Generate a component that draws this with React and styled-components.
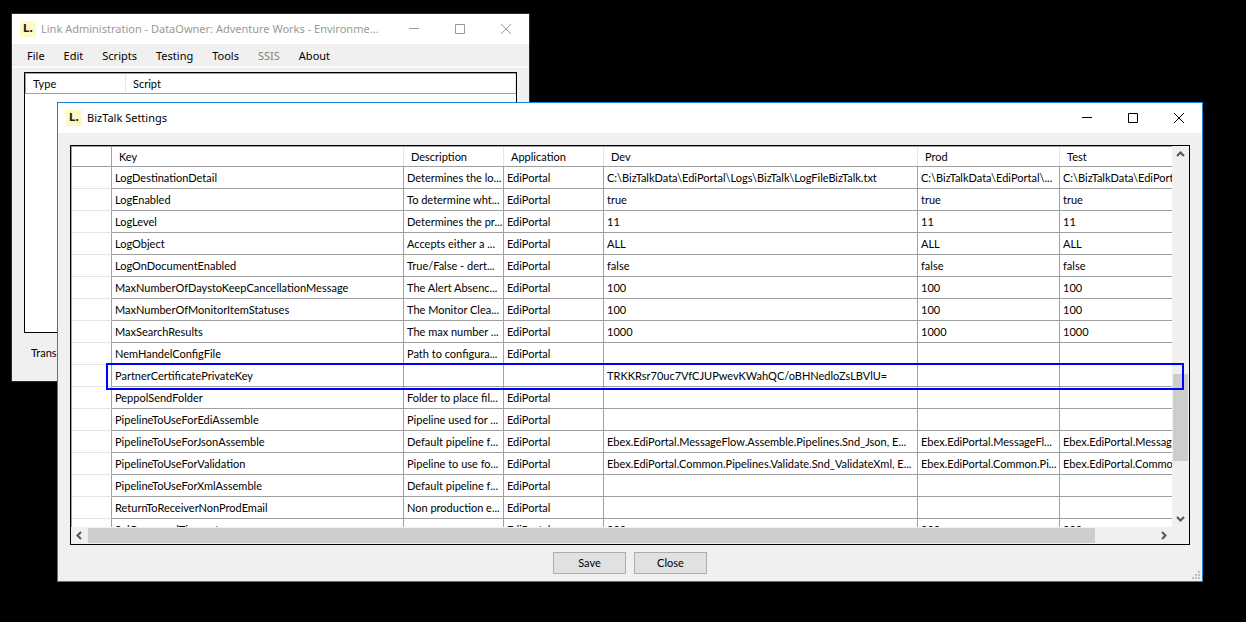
import React from "react"
import styled, { createGlobalStyle, css } from "styled-components"

const GlobalStyle = createGlobalStyle`
  * {
    box-sizing: border-box;
  }
  body {
    margin: 0;
    background: #000;
    color: #000;
    font-family: Lato, "Liberation Sans", sans-serif;
    font-size: 11px;
    line-height: 14px;
  }
  button {
    font: inherit;
    color: inherit;
    border: 0;
    padding: 0;
    background: none;
  }
`

const Desktop = styled.main`
  position: relative;
  height: 100vh;
  overflow: hidden;
`

const Window = styled.section`
  position: absolute;
  display: flex;
  flex-direction: column;
  background: #f0f0f0;
  border: 1px solid ${props => (props.$active ? "#1883d7" : "#2b2b2b")};
`

const MainWindow = styled(Window)`
  top: 13px;
  left: 11px;
  width: 519px;
`

const SettingsWindow = styled(Window)`
  top: 102px;
  right: 43px;
  bottom: 40px;
  left: 57px;
`

const TitleBar = styled.header`
  display: flex;
  align-items: center;
  flex: none;
  height: 30px;
  padding-left: 8px;
  background: #fff;
  color: ${props => (props.$active ? "#000" : "#999")};
`

const Title = styled.h1`
  flex: 1;
  margin: 0 0 0 5px;
  font-family: "Noto Sans", sans-serif;
  font-size: 11px;
  font-weight: normal;
  line-height: 16px;
  white-space: nowrap;
`

const Logo = styled.span`
  display: flex;
  align-items: center;
  justify-content: center;
  width: 16px;
  height: 16px;
  background: #fff9c4;
  color: #222;
  font-family: "DejaVu Sans", sans-serif;
  font-size: 10px;
  font-weight: bold;
  line-height: 16px;
`

const CaptionButton = styled.button`
  display: flex;
  align-items: center;
  justify-content: center;
  width: 46px;
  height: 30px;
`

const MenuBar = styled.nav`
  display: flex;
  align-items: center;
  gap: 19px;
  height: 24px;
  padding: 1px 15px 0;
  border-bottom: 2px solid #f9f9ff;
`

const MenuItem = styled.button`
  font-family: "Noto Sans", sans-serif;
  font-size: 11px;
  line-height: 16px;

  &:disabled {
    color: #838383;
  }
`

const ScriptList = styled.div`
  height: 261px;
  margin: 4px 12px 0;
  background: #fff;
  border: 1px solid #000;
`

const Status = styled.p`
  margin: 0;
  padding: 13px 19px 21px;
`

const GridFrame = styled.div`
  position: relative;
  display: grid;
  grid-template: minmax(0, 1fr) 17px / minmax(0, 1fr) 17px;
  flex: 1;
  min-height: 0;
  margin: 12px 12px 7px;
  background: #f0f0f0;
  border: 1px solid #000;
`

const GridView = styled.div`
  overflow: hidden;
  background: #fff;
  border-top: 1px solid #a0a0a0;
  border-left: 1px solid #a0a0a0;
`

const Table = styled.table`
  width: ${props => (props.$wide ? "1167px" : "100%")};
  table-layout: fixed;
  border-collapse: separate;
  border-spacing: 0;
`

const HeadCell = styled.th`
  height: 20px;
  padding: 1px 7px 0;
  border-bottom: 1px solid #a0a0a0;
  font-weight: normal;
  text-align: left;
  white-space: nowrap;
  box-shadow: inset -1px 0 #e5e5e5;

  ${props =>
    props.$corner &&
    css`
      box-shadow: inset -1px 0 #a0a0a0;
    `}
`

const Cell = styled.td`
  height: 22px;
  padding: 1px 0 0 3px;
  overflow: hidden;
  border-right: 1px solid #a0a0a0;
  border-bottom: 1px solid #a0a0a0;
  white-space: nowrap;
`

const RowHead = styled(Cell)`
  border-bottom-color: #e5e5e5;
`

const Highlight = styled.div`
  position: absolute;
  top: 217px;
  right: 5px;
  left: 35px;
  height: 27px;
  border: 2px solid #00f;
  pointer-events: none;
`

const ScrollBar = styled.div`
  display: flex;
  flex-direction: ${props => (props.$vertical ? "column" : "row")};
  padding: ${props => (props.$vertical ? "0 1px" : "1px 0")};
`

const ScrollButton = styled.button`
  display: flex;
  align-items: center;
  justify-content: center;
  flex: 0 0 17px;
`

const Track = styled.div`
  flex: ${props => props.$size} 0 0;
`

const Thumb = styled(Track)`
  background: #cdcdcd;
`

const Footer = styled.footer`
  display: flex;
  justify-content: center;
  gap: 8px;
  padding-bottom: 7px;
`

const DialogButton = styled.button`
  width: 73px;
  height: 22px;
  background: #e1e1e1;
  border: 1px solid #adadad;
`

const Grip = styled.svg`
  position: absolute;
  right: 1px;
  bottom: 1px;
`

const columns = [
  ["Key", 292],
  ["Description", 100],
  ["Application", 100],
  ["Dev", 314],
  ["Prod", 142],
  ["Test", 179],
]

const same = value => [value, value, value]
const none = same("")

const rows = [
  [
    "LogDestinationDetail",
    "Determines the lo...",
    "EdiPortal",
    "C:\\BizTalkData\\EdiPortal\\Logs\\BizTalk\\LogFileBizTalk.txt",
    "C:\\BizTalkData\\EdiPortal\\...",
    "C:\\BizTalkData\\EdiPortal\\...",
  ],
  ["LogEnabled", "To determine wht...", "EdiPortal", ...same("true")],
  ["LogLevel", "Determines the pr...", "EdiPortal", ...same("11")],
  ["LogObject", "Accepts either a ...", "EdiPortal", ...same("ALL")],
  ["LogOnDocumentEnabled", "True/False - dert...", "EdiPortal", ...same("false")],
  [
    "MaxNumberOfDaystoKeepCancellationMessage",
    "The Alert Absenc...",
    "EdiPortal",
    ...same("100"),
  ],
  [
    "MaxNumberOfMonitorItemStatuses",
    "The Monitor Clea...",
    "EdiPortal",
    ...same("100"),
  ],
  ["MaxSearchResults", "The max number ...", "EdiPortal", ...same("1000")],
  ["NemHandelConfigFile", "Path to configura...", "EdiPortal", ...none],
  [
    "PartnerCertificatePrivateKey",
    "",
    "",
    "TRKKRsr70uc7VfCJUPwevKWahQC/oBHNedloZsLBVlU=",
    "",
    "",
  ],
  ["PeppolSendFolder", "Folder to place fil...", "EdiPortal", ...none],
  ["PipelineToUseForEdiAssemble", "Pipeline used for ...", "EdiPortal", ...none],
  [
    "PipelineToUseForJsonAssemble",
    "Default pipeline f...",
    "EdiPortal",
    "Ebex.EdiPortal.MessageFlow.Assemble.Pipelines.Snd_Json, E...",
    "Ebex.EdiPortal.MessageFl...",
    "Ebex.EdiPortal.MessageFlow...",
  ],
  [
    "PipelineToUseForValidation",
    "Pipeline to use fo...",
    "EdiPortal",
    "Ebex.EdiPortal.Common.Pipelines.Validate.Snd_ValidateXml, E...",
    "Ebex.EdiPortal.Common.Pi...",
    "Ebex.EdiPortal.Common.Pipe...",
  ],
  ["PipelineToUseForXmlAssemble", "Default pipeline f...", "EdiPortal", ...none],
  ["ReturnToReceiverNonProdEmail", "Non production e...", "EdiPortal", ...none],
  ["SqlCommandTimeout", "", "EdiPortal", ...same("900")],
]

const menu = ["File", "Edit", "Scripts", "Testing", "Tools", "SSIS", "About"]

const captions = [
  ["Minimize", "M0 4.5H10"],
  ["Maximize", "M.5 .5H9.5V9.5H.5Z"],
  ["Close window", "M0 0L10 10M10 0L0 10"],
]

const arrows = {
  up: "M1 6L4.5 2.5L8 6",
  down: "M1 3L4.5 6.5L8 3",
  left: "M6 1L2.5 4.5L6 8",
  right: "M3 1L6.5 4.5L3 8",
}

const WindowTitle = ({ active, children }) => (
  <TitleBar $active={active}>
    <Logo>L.</Logo>
    <Title>{children}</Title>
    {captions.map(([label, d]) => (
      <CaptionButton key={label} aria-label={label}>
        <svg width="10" height="10" fill="none" stroke="currentColor">
          <path d={d} />
        </svg>
      </CaptionButton>
    ))}
  </TitleBar>
)

const Arrow = ({ to }) => (
  <ScrollButton aria-label={`Scroll ${to}`}>
    <svg width="9" height="9" fill="none" stroke="#555" strokeWidth="2">
      <path d={arrows[to]} />
    </svg>
  </ScrollButton>
)

const SettingsTable = () => (
  <Table $wide>
    <colgroup>
      <col width="40" />
      {columns.map(([name, width]) => (
        <col key={name} width={width} />
      ))}
    </colgroup>
    <thead>
      <tr>
        <HeadCell $corner />
        {columns.map(([name]) => (
          <HeadCell key={name} scope="col">
            {name}
          </HeadCell>
        ))}
      </tr>
    </thead>
    <tbody>
      {rows.map(row => (
        <tr key={row[0]}>
          <RowHead />
          {row.map((value, i) => (
            <Cell key={columns[i][0]}>{value}</Cell>
          ))}
        </tr>
      ))}
    </tbody>
  </Table>
)

const App = () => {
  return (
    <Desktop>
      <GlobalStyle />
      <MainWindow>
        <WindowTitle>
          Link Administration - DataOwner: Adventure Works - Environme...
        </WindowTitle>
        <MenuBar>
          {menu.map(item => (
            <MenuItem key={item} disabled={item === "SSIS"}>
              {item}
            </MenuItem>
          ))}
        </MenuBar>
        <ScriptList>
          <GridView>
            <Table>
              <colgroup>
                <col width="100" />
                <col />
              </colgroup>
              <thead>
                <tr>
                  <HeadCell scope="col">Type</HeadCell>
                  <HeadCell scope="col">Script</HeadCell>
                </tr>
              </thead>
            </Table>
          </GridView>
        </ScriptList>
        <Status>Trans</Status>
      </MainWindow>
      <SettingsWindow $active>
        <WindowTitle active>BizTalk Settings</WindowTitle>
        <GridFrame>
          <GridView>
            <SettingsTable />
          </GridView>
          <ScrollBar $vertical>
            <Arrow to="up" />
            <Track $size={211} />
            <Thumb $size={87} />
            <Track $size={49} />
            <Arrow to="down" />
          </ScrollBar>
          <ScrollBar>
            <Arrow to="left" />
            <Thumb $size={1007} />
            <Track $size={60} />
            <Arrow to="right" />
          </ScrollBar>
          <Highlight />
        </GridFrame>
        <Footer>
          <DialogButton>Save</DialogButton>
          <DialogButton>Close</DialogButton>
        </Footer>
        <Grip width="9" height="9" fill="#bfbfbf">
          <path d="M6 0h2v2h-2zM3 3h2v2h-2zM6 3h2v2h-2zM0 6h2v2h-2zM3 6h2v2h-2zM6 6h2v2h-2z" />
        </Grip>
      </SettingsWindow>
    </Desktop>
  )
}
export default App
